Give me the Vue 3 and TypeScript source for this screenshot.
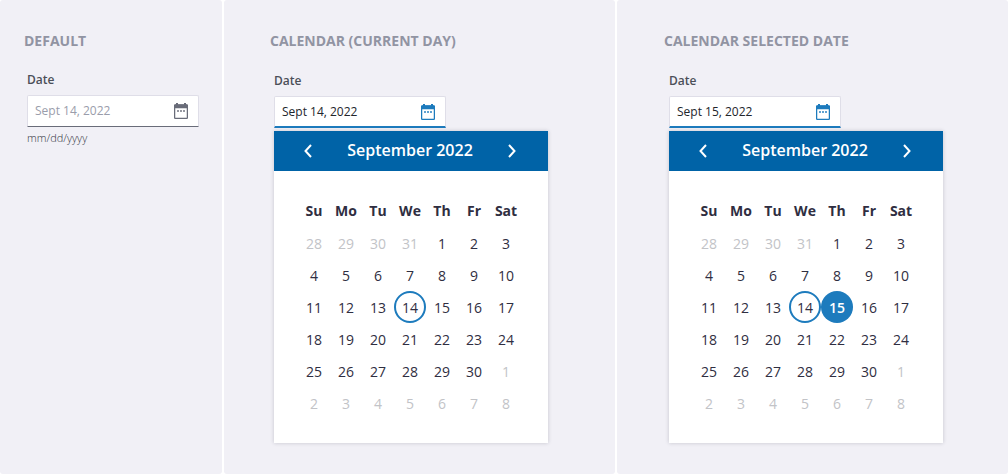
<script setup lang="ts">
import { ref } from 'vue'

interface Panel {
  id: string
  title: string
  value: string
  open: boolean
  selected?: number
  hint?: string
}

interface Day {
  n: number
  outside: boolean
}

const panels = ref<Panel[]>([
  { id: 'default', title: 'Default', value: '', open: false, hint: 'mm/dd/yyyy' },
  { id: 'current', title: 'Calendar (current day)', value: 'Sept 14, 2022', open: true },
  { id: 'selected', title: 'Calendar selected date', value: 'Sept 15, 2022', open: true, selected: 15 },
])

const today = 14
const weekdays = ['Su', 'Mo', 'Tu', 'We', 'Th', 'Fr', 'Sat']

const days: Day[] = [
  ...[28, 29, 30, 31].map((n) => ({ n, outside: true })),
  ...Array.from({ length: 30 }, (_, i) => ({ n: i + 1, outside: false })),
  ...[1, 2, 3, 4, 5, 6, 7, 8].map((n) => ({ n, outside: true })),
]
const weeks: Day[][] = Array.from({ length: 6 }, (_, w) => days.slice(w * 7, w * 7 + 7))

function pick(panel: Panel, day: Day) {
  if (day.outside) return
  panel.selected = day.n
  panel.value = `Sept ${day.n}, 2022`
}
</script>

<template>
  <main class="board">
    <section v-for="p in panels" :key="p.id" class="panel" :class="p.id">
      <h2>{{ p.title }}</h2>
      <div class="picker" :class="{ open: p.open }">
        <label :for="'date-' + p.id">Date</label>
        <div class="field">
          <input :id="'date-' + p.id" v-model="p.value" type="text" placeholder="Sept 14, 2022" />
          <button type="button" class="toggle" aria-label="Toggle calendar" @click="p.open = !p.open">
            <svg width="14" height="16" viewBox="0 0 14 16" aria-hidden="true">
              <rect x="2" y="0" width="2" height="3" fill="currentColor" />
              <rect x="10" y="0" width="2" height="3" fill="currentColor" />
              <path fill="currentColor" d="M1 1.400h12a1 1 0 0 1 1 1V5.300H0V2.400a1 1 0 0 1 1-1z" />
              <rect x=".6" y="2" width="12.800" height="13.400" rx="1" fill="none" stroke="currentColor" stroke-width="1.300" />
              <path fill="currentColor" opacity=".7" d="M3 7h2v2H3zM6 7h2v2H6zM9 7h2v2H9z" />
            </svg>
          </button>
        </div>
        <p v-if="p.hint" class="hint">{{ p.hint }}</p>
        <div v-if="p.open" class="calendar">
          <header>
            <button type="button" aria-label="Previous month">
              <svg width="8" height="14" viewBox="0 0 8 14" aria-hidden="true">
                <path d="M7 1 1.500 7 7 13" fill="none" stroke="currentColor" stroke-width="2" />
              </svg>
            </button>
            <h3>September 2022</h3>
            <button type="button" aria-label="Next month">
              <svg width="8" height="14" viewBox="0 0 8 14" aria-hidden="true">
                <path d="M1 1 6.500 7 1 13" fill="none" stroke="currentColor" stroke-width="2" />
              </svg>
            </button>
          </header>
          <table>
            <thead>
              <tr>
                <th v-for="d in weekdays" :key="d" scope="col">{{ d }}</th>
              </tr>
            </thead>
            <tbody>
              <tr v-for="(week, w) in weeks" :key="w">
                <td v-for="(day, i) in week" :key="i">
                  <button
                    type="button"
                    class="day"
                    :class="{
                      outside: day.outside,
                      today: !day.outside && day.n === today,
                      chosen: !day.outside && day.n === p.selected,
                    }"
                    @click="pick(p, day)"
                  >
                    {{ day.n }}
                  </button>
                </td>
              </tr>
            </tbody>
          </table>
        </div>
      </div>
    </section>
  </main>
</template>

<style>
body {
  background: #fff;
}
</style>

<style scoped>
* {
  box-sizing: border-box;
}

.board {
  display: grid;
  grid-template-columns: minmax(0, 222fr) minmax(0, 391fr) minmax(0, 391fr);
  gap: 2px;
  min-height: 100vh;
  font-family: 'Open Sans', 'Noto Sans', sans-serif;
}

.panel {
  padding: 31px 20px 31px 24px;
  border-radius: 3px;
  background: #f1f0f6;
}

.current {
  padding-left: 46px;
}

.selected {
  padding-left: 47px;
}

h2 {
  margin: 0;
  font-size: 14px;
  line-height: 20px;
  font-weight: 700;
  text-transform: uppercase;
  color: #9194a3;
}

.picker {
  padding: 21px 0 0 3px;
}

.picker.open {
  padding: 22px 0 0 4px;
}

.selected .picker.open {
  padding-left: 5px;
}

label {
  display: block;
  font-size: 12px;
  line-height: 16px;
  font-weight: 600;
  color: #4b4f58;
}

.field {
  display: flex;
  align-items: center;
  width: 172px;
  height: 32px;
  margin-top: 7px;
  padding: 0 10px 0 7px;
  border: 1px solid #dfdee8;
  border-bottom-color: #696c79;
  border-radius: 2px 2px 0 0;
  background: #fff;
}

.open .field {
  border-bottom: 2px solid #1d7bbd;
}

input {
  flex: 1;
  min-width: 0;
  padding: 0;
  border: 0;
  outline: 0;
  background: none;
  font: 12px/16px 'Open Sans', 'Noto Sans', sans-serif;
  color: #22252b;
}

input::placeholder {
  color: #9a9dab;
  opacity: 1;
}

button {
  display: flex;
  align-items: center;
  justify-content: center;
  padding: 0;
  border: 0;
  background: none;
  font-family: inherit;
  color: inherit;
  cursor: pointer;
}

.toggle {
  color: #696c79;
}

.open .toggle {
  color: #1d7bbd;
}

.hint {
  margin: 3px 0 0;
  font-size: 11px;
  line-height: 16px;
  font-weight: 300;
  color: #33363f;
}

.calendar {
  width: 274px;
  margin-top: 3px;
  background: #fff;
  box-shadow: 0 0 4px rgba(40, 40, 60, 0.22);
}

header {
  display: flex;
  align-items: center;
  justify-content: space-between;
  height: 40px;
  padding: 0 24px 0 22px;
  background: #0063a7;
  color: #fff;
}

header button {
  width: 24px;
  height: 24px;
}

h3 {
  margin: 0;
  padding-bottom: 2px;
  font-size: 16px;
  line-height: 24px;
  font-weight: 600;
}

table {
  display: block;
  padding: 24px 26px 24px 24px;
  border-collapse: collapse;
  border-spacing: 0;
  color: #2f2e41;
}

th,
td {
  width: 32px;
  height: 32px;
  padding: 0;
  font-size: 14px;
  line-height: 20px;
  text-align: center;
}

.day {
  width: 32px;
  height: 32px;
  padding-top: 2px;
  border-radius: 50%;
  font-size: 14px;
  line-height: 20px;
}

.outside {
  color: #c2c3c7;
}

.today {
  border: 2px solid #1d7bbd;
}

.chosen {
  background: #1d7bbd;
  color: #fff;
  font-weight: 600;
}
</style>
